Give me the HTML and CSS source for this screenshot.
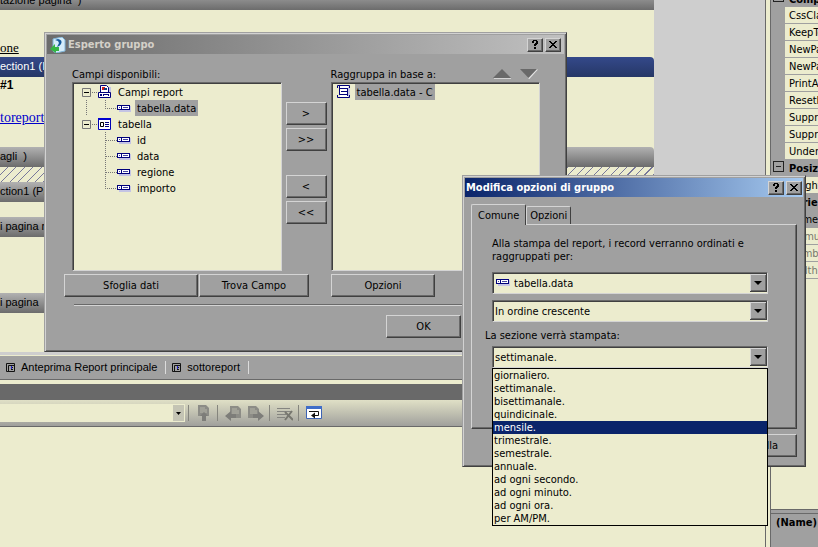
FILE: index.html
```html
<!DOCTYPE html>
<html lang="it">
<head>
    <meta charset="UTF-8">
    <meta name="viewport" content="width=device-width, initial-scale=1.0">
    <title>Esperto gruppo</title>
    <link rel="stylesheet" href="styles.css">
</head>
<body>
    <!-- Shared icons -->
    <svg class="sprite" aria-hidden="true">
        <symbol id="field" viewBox="0 0 14 16">
            <path d="M2 6h12v6H2z" fill="#c4c4e4"/>
            <path d="M0 5h13v5H0z" fill="#00007b"/>
            <path d="M1 6h3v3H1zM6 7h6v1H6z" fill="#fff"/>
            <path d="M5 6h7v3H5z" fill="#fff"/>
            <path d="M2 7h1v1H2zM6 7h5v1H6z" fill="#4646a0"/>
        </symbol>
        <symbol id="report" viewBox="0 0 14 16">
            <path d="M4 3h9v11H4z" fill="#c4c4e4"/>
            <path d="M2.500 9.500v-8h6l2 2v6z" fill="#fff" stroke="#00007b"/>
            <path d="M4 3h3v3H4z" fill="#d01818"/>
            <path d="M6 4h3v2H6z" fill="#123a7a"/>
            <path d="M0.500 8.500h12v5H0.500z" fill="#fff" stroke="#00007b"/>
            <path d="M2 10h2v2H2zM5 10h6v2H5z" fill="#00007b"/>
            <path d="M6 11h4v1H6z" fill="#fff"/>
        </symbol>
        <symbol id="table" viewBox="0 0 14 16">
            <path d="M0.500 2.500h12v11H0.500z" fill="#fff" stroke="#0000b4"/>
            <path d="M0 2h13v2H0z" fill="#0000d0"/>
            <path d="M2.500 6.500h3v4h-3z" fill="none" stroke="#000"/>
            <path d="M7 6.500h4M7 8.500h4M7 10.500h4" stroke="#00007b"/>
        </symbol>
        <symbol id="tree-parent" viewBox="0 0 20 16">
            <path d="M14 8.500h6" stroke="#777" stroke-dasharray="1 1"/>
            <path d="M4.500 4.500h8v8h-8z" fill="#ececce" stroke="#777"/>
            <path d="M6 8.500h5" stroke="#000"/>
        </symbol>
        <symbol id="tree-trunk" viewBox="0 0 20 16">
            <path d="M8.500 0v16" stroke="#777" stroke-dasharray="1 1"/>
        </symbol>
        <symbol id="tree-child" viewBox="0 0 19 16">
            <path d="M7.500 0v16M8 8.500h11" stroke="#777" stroke-dasharray="1 1"/>
        </symbol>
        <symbol id="tree-last" viewBox="0 0 19 16">
            <path d="M7.500 0v8M7 8.500h12" stroke="#777" stroke-dasharray="1 1"/>
        </symbol>
        <symbol id="preview" viewBox="0 0 10 10">
            <path d="M0.500 0.500h8v8h-8z" fill="none" stroke="#111"/>
            <path d="M2.500 8V2.500H8" stroke="#111" fill="none"/>
            <path d="M5 4.500h2M5 6.500h2" stroke="#111"/>
            <path d="M5 3h1v3H5z" fill="#22c"/>
        </symbol>
        <symbol id="help" viewBox="0 0 10 10">
            <path d="M2 1h1V0h4v1h1v3H7v1H6v1H4V4h1V3h1V1H4v2H2zM4 7h2v2H4z"/>
        </symbol>
        <symbol id="close" viewBox="0 0 10 10">
            <path d="M1 1h2v1h1v1h2V2h1V1h2v1H8v1H7v1H6v1h1v1h1v1h1v1H7V7H6V6H4v1H3v1H1V7h1V6h1V5h1V4H3V3H2V2H1z"/>
        </symbol>
        <symbol id="page" viewBox="0 0 16 16">
            <path d="M3 1h8l3 3v8H3z" fill="#8c8c86"/>
            <path d="M5 4h5M5 6h7M5 8h7" stroke="#b5b5a8"/>
        </symbol>
    </svg>

    <div class="workspace">
        <main class="editor">
            <div class="designer">
                <div class="report">
                    <div class="band band-first">tazione pagina&nbsp; )</div>
                    <div class="canvas canvas-title"><span class="serif">one</span></div>
                    <div class="band band-selected">ection1 (I</div>
                    <div class="canvas canvas-group">
                        <strong>#1</strong>
                        <a href="#sottoreport">toreport</a>
                    </div>
                    <div class="band">agli&nbsp; )</div>
                    <div class="canvas canvas-hatched"></div>
                    <div class="band">ction1 (Pi</div>
                    <div class="canvas canvas-thin"></div>
                    <div class="band">i pagina r</div>
                    <div class="canvas canvas-footer"></div>
                    <div class="band">i pagina</div>
                    <div class="canvas canvas-end"></div>
                </div>
            </div>
            <nav class="view-tabs">
                <a href="#anteprima"><svg width="10" height="10"><use href="#preview"/></svg>Anteprima Report principale</a>
                <a href="#sottoreport"><svg width="10" height="10"><use href="#preview"/></svg>sottoreport</a>
            </nav>
            <div class="output-title"></div>
            <div class="output-bar">
                <select class="output-source" aria-label="Origine output"></select>
                <div class="tool-group">
                    <button type="button" aria-label="Vai al messaggio">
                        <svg width="16" height="18" viewBox="0 0 16 18"><path d="M2 1h8l3 3v8H2z" fill="#8c8c86"/><path d="M4 4h5M4 6h7M4 8h7" stroke="#b5b5a8"/><path d="M8 8l4 4h-2v5H6v-5H4z" fill="#7d7d79"/></svg>
                    </button>
                </div>
                <div class="tool-group">
                    <button type="button" aria-label="Messaggio precedente">
                        <svg width="16" height="16" viewBox="0 0 16 16"><path d="M5 1h8l3 3v9H5z" fill="#8c8c86"/><path d="M7 4h5M7 6h7M7 8h7" stroke="#b5b5a8"/><path d="M0 11l6-5v3h5v4H6v3z" fill="#7d7d79"/></svg>
                    </button>
                    <button type="button" aria-label="Messaggio successivo">
                        <svg width="16" height="16" viewBox="0 0 16 16"><path d="M0 1h8l3 3v9H0z" fill="#8c8c86"/><path d="M2 4h5M2 6h7M2 8h7" stroke="#b5b5a8"/><path d="M16 11l-6-5v3H5v4h5v3z" fill="#7d7d79"/></svg>
                    </button>
                </div>
                <div class="tool-group">
                    <button type="button" aria-label="Cancella tutto">
                        <svg width="16" height="16" viewBox="0 0 16 16"><path d="M0 3.500h13M0 6.500h14M0 9.500h9M0 12.500h8" stroke="#858580"/><path d="M8 7l8 8M15 6l-7 9" stroke="#77776f" stroke-width="2"/></svg>
                    </button>
                </div>
                <div class="tool-group">
                    <button type="button" aria-label="A capo automatico">
                        <svg width="16" height="14" viewBox="0 0 16 14"><path d="M0.500 0.500h15v12H0.500z" fill="#fff" stroke="#3c63b4"/><path d="M0 0h16v3H0z" fill="#3f6dc8"/><path d="M3 5.500h9.500v4H7" fill="none" stroke="#111"/><path d="M5 9.500l4-3v6z" fill="#111"/></svg>
                    </button>
                </div>
            </div>
            <div class="output"></div>
        </main>

        <aside class="properties">
            <ul>
                <li class="category category-first">Comportamento</li>
                <li>CssClass</li>
                <li>KeepTogether</li>
                <li>NewPageAfter</li>
                <li>NewPageBefore</li>
                <li>PrintAtBottom</li>
                <li>ResetPage</li>
                <li>Suppress</li>
                <li>SuppressBlank</li>
                <li>Underlay</li>
                <li class="category">Posizione</li>
                <li>Height</li>
                <li class="category">Varie</li>
                <li class="current">Name</li>
                <li class="readonly">Formula</li>
                <li class="readonly">Number</li>
                <li class="readonly">Width</li>
            </ul>
            <div class="description">(Name)</div>
        </aside>
    </div>

    <!-- Group expert -->
    <section class="window expert" role="dialog" aria-labelledby="expert-title">
        <header class="title-bar inactive">
            <svg width="16" height="16" viewBox="0 0 16 16"><path d="M3 2l9-2 3 3v11l-9 2-3-2z" fill="#d5edfa" stroke="#80b4d8"/><path d="M5 3l3-1q5 1 3 5-1 2-4 3l2-4-1-2z" fill="#145a9c"/><path d="M0 12l5-5v3h4v4H6v2z" fill="#35b545"/></svg>
            <h2 id="expert-title">Esperto gruppo</h2>
            <button type="button" aria-label="Guida"><svg width="10" height="10"><use href="#help"/></svg></button>
            <button type="button" aria-label="Chiudi"><svg width="10" height="10"><use href="#close"/></svg></button>
        </header>
        <div class="expert-lists">
            <div class="list-column">
                <div class="list-heading">Campi disponibili:</div>
                <ul class="list-box tree">
                    <li><svg width="20" height="16"><use href="#tree-parent"/></svg><svg width="14" height="16"><use href="#report"/></svg><span>Campi report</span></li>
                    <li><svg width="20" height="16"><use href="#tree-trunk"/></svg><svg width="19" height="16"><use href="#tree-last"/></svg><svg width="14" height="16"><use href="#field"/></svg><span class="chosen">tabella.data</span></li>
                    <li><svg width="20" height="16"><use href="#tree-parent"/></svg><svg width="14" height="16"><use href="#table"/></svg><span>tabella</span></li>
                    <li class="leaf"><svg width="19" height="16"><use href="#tree-child"/></svg><svg width="14" height="16"><use href="#field"/></svg><span>id</span></li>
                    <li class="leaf"><svg width="19" height="16"><use href="#tree-child"/></svg><svg width="14" height="16"><use href="#field"/></svg><span>data</span></li>
                    <li class="leaf"><svg width="19" height="16"><use href="#tree-child"/></svg><svg width="14" height="16"><use href="#field"/></svg><span>regione</span></li>
                    <li class="leaf"><svg width="19" height="16"><use href="#tree-last"/></svg><svg width="14" height="16"><use href="#field"/></svg><span>importo</span></li>
                </ul>
            </div>
            <div class="move-buttons">
                <button type="button" class="btn">&gt;</button>
                <button type="button" class="btn">&gt;&gt;</button>
                <button type="button" class="btn btn-remove">&lt;</button>
                <button type="button" class="btn">&lt;&lt;</button>
            </div>
            <div class="list-column">
                <div class="list-heading">
                    <span>Raggruppa in base a:</span>
                    <button type="button" class="arrow" aria-label="Sposta su"><svg width="18" height="10" viewBox="0 0 18 10"><path d="M1 9.500h17" stroke="#d4d4d4"/><path d="M0 9L9 0l9 9z" fill="#696969"/></svg></button>
                    <button type="button" class="arrow" aria-label="Sposta giù"><svg width="18" height="10" viewBox="0 0 18 10"><path d="M17 0L8.500 9.500" stroke="#e4e4e4" stroke-width="2"/><path d="M0 0h17L8.500 9z" fill="#696969"/></svg></button>
                </div>
                <ul class="list-box">
                    <li><svg width="14" height="16" viewBox="0 0 14 16"><path d="M4 3h9v11H4z" fill="#c4c4e4"/><path d="M3 2h8v11H3z" fill="#fff"/><path d="M0.500 4V1.500h12V4M2.500 2v8M10.500 4v8M2 4.500h8M4 7.500h6M2 10.500h8M0.500 11v2.500h12V11" fill="none" stroke="#00007b"/></svg><span class="chosen">tabella.data - C</span></li>
                </ul>
            </div>
        </div>
        <div class="expert-actions">
            <button type="button" class="btn btn-browse">Sfoglia dati</button>
            <button type="button" class="btn btn-find">Trova Campo</button>
            <button type="button" class="btn btn-options">Opzioni</button>
        </div>
        <hr>
        <div class="expert-footer">
            <button type="button" class="btn">OK</button>
        </div>
    </section>

    <!-- Group options -->
    <section class="window options" role="dialog" aria-labelledby="options-title">
        <header class="title-bar">
            <h2 id="options-title">Modifica opzioni di gruppo</h2>
            <button type="button" aria-label="Guida"><svg width="10" height="10"><use href="#help"/></svg></button>
            <button type="button" aria-label="Chiudi"><svg width="10" height="10"><use href="#close"/></svg></button>
        </header>
        <div class="tabs" role="tablist">
            <button type="button" class="tab active" role="tab" aria-selected="true">Comune</button>
            <button type="button" class="tab" role="tab" aria-selected="false">Opzioni</button>
        </div>
        <div class="tab-panel">
            <label for="group-field">Alla stampa del report, i record verranno ordinati e raggruppati per:</label>
            <div class="combo combo-field">
                <svg class="combo-icon" width="14" height="16"><use href="#field"/></svg>
                <select id="group-field"><option>tabella.data</option></select>
            </div>
            <div class="combo">
                <select aria-label="Ordine"><option>In ordine crescente</option></select>
            </div>
            <label class="section-label" for="period">La sezione verrà stampata:</label>
            <div class="combo">
                <select id="period"><option>settimanale.</option></select>
                <ul class="drop-list" role="listbox" aria-label="Periodo">
                    <li role="option">giornaliero.</li>
                    <li role="option">settimanale.</li>
                    <li role="option">bisettimanale.</li>
                    <li role="option">quindicinale.</li>
                    <li role="option" class="active" aria-selected="true">mensile.</li>
                    <li role="option">trimestrale.</li>
                    <li role="option">semestrale.</li>
                    <li role="option">annuale.</li>
                    <li role="option">ad ogni secondo.</li>
                    <li role="option">ad ogni minuto.</li>
                    <li role="option">ad ogni ora.</li>
                    <li role="option">per AM/PM.</li>
                </ul>
            </div>
        </div>
        <div class="options-footer">
            <button type="button" class="btn">Annulla</button>
        </div>
    </section>
</body>
</html>
```
FILE: styles.css
```css
* {
    box-sizing: border-box;
}

body {
    margin: 0;
    height: 100vh;
    overflow: hidden;
    position: relative;
    font-family: "DejaVu Sans Condensed", Tahoma, sans-serif;
    font-size: 11px;
    line-height: 13px;
    color: #000;
    background-color: #ececce;
}

ul {
    list-style: none;
    margin: 0;
    padding: 0;
}

h2 {
    margin: 0;
}

svg {
    display: block;
    flex: none;
}

button,
select {
    font: inherit;
    color: inherit;
    margin: 0;
    padding: 0;
    border-radius: 0;
}

.sprite {
    position: absolute;
    width: 0;
    height: 0;
}

/* Report designer */
.workspace {
    display: flex;
    height: 100%;
}

.editor {
    flex: 1;
    min-width: 0;
    display: flex;
    flex-direction: column;
    border-right: 1px solid #696969;
}

.designer {
    background-color: #cecece;
    border-bottom: 3px solid #cecece;
}

.report {
    margin-right: 111px;
    background-color: #ececce;
}

.band {
    height: 20px;
    line-height: 18px;
    font-family: "Liberation Sans", Arial, sans-serif;
    font-size: 11px;
    white-space: nowrap;
    overflow: hidden;
    background: linear-gradient(#b2b2b2, #6c6c6c);
    border-top-right-radius: 4px;
}

.band-first {
    height: 10px;
    line-height: 0;
    border-radius: 0;
    background: linear-gradient(#8c8c8c, #6c6c6c);
}

.band-selected {
    color: #fff;
    background: linear-gradient(#34498a, #263766);
}

.canvas-title {
    height: 47px;
    padding-top: 31px;
}

.serif {
    font-family: "Liberation Serif", serif;
    font-size: 13px;
    text-decoration: underline;
}

.canvas-group {
    height: 70px;
}

.canvas-group strong,
.canvas-group a {
    display: block;
}

.canvas-group strong {
    padding-bottom: 18px;
    font-family: "Liberation Sans", Arial, sans-serif;
    font-size: 12px;
    line-height: 16px;
}

.canvas-group a {
    font-family: "Liberation Serif", serif;
    font-size: 14px;
    color: #00c;
}

.canvas-hatched {
    height: 15px;
    background: repeating-linear-gradient(135deg, #ececce 0 5px, #77779b 5px 6px);
}

.canvas-thin {
    height: 15px;
}

.canvas-footer {
    height: 56px;
}

.canvas-end {
    height: 39px;
}

.view-tabs {
    display: flex;
    align-items: center;
    height: 24px;
    margin-top: 1px;
    background-color: #a0a0a0;
    border-bottom: 1px solid #696969;
    font-family: "Liberation Sans", Arial, sans-serif;
}

.view-tabs a {
    display: flex;
    align-items: center;
    gap: 5px;
    padding: 0 8px 0 6px;
    color: #000;
    text-decoration: none;
    border-right: 1px solid #dcdcdc;
}

.output-title {
    height: 16px;
    margin-top: 4px;
    background-color: #696969;
}

.output-bar {
    display: flex;
    align-items: center;
    height: 27px;
    background: linear-gradient(#e0e0c6, #a0a09c);
    border-bottom: 1px solid #696969;
}

.output-source {
    appearance: none;
    width: 185px;
    height: 18px;
    border: 1px solid #ececce;
    background: url("data:image/svg+xml,%3Csvg xmlns='http://www.w3.org/2000/svg' width='11' height='16'%3E%3Cpath d='M0 0h11v16H0z' fill='%23c4c4b4'/%3E%3Cpath d='M3 7h5L5.500 10z'/%3E%3C/svg%3E") no-repeat right center #ececce;
}

.tool-group {
    display: flex;
    align-items: center;
    gap: 7px;
    height: 16px;
    margin-left: 3px;
    padding: 0 2px 0 7px;
    border-left: 1px solid #85857d;
}

.tool-group button {
    border: none;
    background: none;
}

.output {
    flex: 1;
}

/* Property grid */
.properties {
    flex: none;
    display: flex;
    flex-direction: column;
    width: 48px;
    margin-left: 4px;
    border-left: 1px solid #696969;
}

.properties ul {
    flex: 1;
}

.properties li {
    height: 17px;
    margin-left: 14px;
    padding-left: 4px;
    line-height: 17px;
    overflow: hidden;
    white-space: nowrap;
    border-bottom: 1px solid #a0a0a0;
    box-shadow: -14px 0 #a0a0a0;
}

.properties .category {
    position: relative;
    margin-left: 0;
    padding-left: 18px;
    font-weight: bold;
    background-color: #a0a0a0;
    box-shadow: none;
}

.properties .category-first {
    height: 7px;
    line-height: 0;
}

.category::before {
    content: "";
    position: absolute;
    left: 2px;
    bottom: 4px;
    width: 9px;
    height: 9px;
    border: 1px solid #222;
    background: linear-gradient(#222, #222) center / 5px 1px no-repeat;
}

.properties .current {
    background-color: #a0a0a0;
}

.properties .readonly {
    color: #77776c;
    box-shadow: none;
}

.description {
    height: 38px;
    padding: 5px;
    line-height: 15px;
    font-weight: bold;
    white-space: nowrap;
    overflow: hidden;
    background: linear-gradient(#696969, #696969) 0 3px / 100% 1px no-repeat #a0a0a0;
    border-top: 1px solid #696969;
}

/* Windows */
.window {
    position: absolute;
    padding: 2px;
    background-color: #a0a0a0;
    border: 1px solid;
    border-color: #a0a0a0 #404040 #404040 #a0a0a0;
    box-shadow: inset 1px 1px #d2d2d2, inset -1px -1px #696969;
}

.expert {
    left: 44px;
    top: 32px;
    width: 523px;
    height: 320px;
}

.options {
    left: 462px;
    top: 175px;
    width: 344px;
    height: 292px;
}

.title-bar {
    display: flex;
    align-items: center;
    gap: 2px;
    height: 19px;
    padding: 0 1px;
    color: #fff;
    background: linear-gradient(to right, #0a246a, #a6caf0);
}

.title-bar.inactive {
    padding: 0 3px;
    color: #d4d0c8;
    background: linear-gradient(to right, #6c6c6c, #c0c0c0);
}

.title-bar h2 {
    flex: 1;
    font-size: 11px;
    line-height: 13px;
}

.title-bar button {
    display: flex;
    align-items: center;
    justify-content: center;
    width: 16px;
    height: 14px;
}

.btn,
.title-bar button {
    background-color: #a0a0a0;
    border: 1px solid;
    border-color: #d4d4d4 #404040 #404040 #d4d4d4;
    box-shadow: inset -1px -1px #696969;
}

.btn {
    height: 23px;
    width: 75px;
}

.expert-lists {
    display: flex;
    gap: 4px;
    padding: 12px 24px 0 25px;
}

.list-column {
    flex: 1;
}

.list-heading {
    display: flex;
    align-items: center;
    gap: 9px;
    height: 16px;
    padding-right: 2px;
}

.list-heading span {
    flex: 1;
}

.arrow {
    border: none;
    background: none;
}

.list-box {
    height: 189px;
    padding: 1px 5px;
    background-color: #ececce;
    border: 1px solid;
    border-color: #696969 #d4d4d4 #d4d4d4 #696969;
    box-shadow: inset 1px 1px #404040;
}

.list-box li {
    display: flex;
    align-items: center;
    height: 16px;
}

.list-box span {
    margin-left: 4px;
    padding: 2px 2px 1px;
}

.tree .leaf {
    padding-left: 20px;
}

.chosen {
    background-color: #a0a0a0;
}

.move-buttons {
    display: flex;
    flex-direction: column;
    gap: 3px;
    padding-top: 36px;
}

.move-buttons .btn {
    width: 41px;
}

.move-buttons .btn-remove {
    margin-top: 21px;
}

.expert-actions {
    display: flex;
    gap: 1px;
    padding: 3px 17px 0;
}

.btn-browse {
    width: 134px;
}

.btn-find {
    width: 110px;
}

.btn-options {
    width: 104px;
    margin-left: 21px;
}

hr {
    height: 2px;
    margin: 7px 24px 0 27px;
    border: none;
    border-top: 1px solid #696969;
    border-bottom: 1px solid #d4d4d4;
}

.expert-footer {
    display: flex;
    justify-content: flex-end;
    padding: 9px 103px 0 0;
}

.tabs {
    display: flex;
    align-items: flex-end;
    padding: 7px 6px 0;
}

.tab {
    height: 18px;
    padding: 0 3px;
    background-color: #a0a0a0;
    border: 1px solid;
    border-color: #d4d4d4 #404040 #a0a0a0 #d4d4d4;
    border-bottom: none;
    border-radius: 2px 2px 0 0;
}

.tab.active {
    height: 21px;
    padding: 0 6px;
    margin-bottom: -1px;
    z-index: 1;
}

.tab-panel {
    height: 205px;
    margin: 0 6px;
    padding: 12px 28px 0 20px;
    border: 1px solid;
    border-color: #d4d4d4 #404040 #404040 #d4d4d4;
    box-shadow: inset -1px -1px #696969;
}

.tab-panel label {
    display: block;
    margin-bottom: 9px;
}

.tab-panel .section-label {
    margin: 7px 0 4px -7px;
}

.combo {
    position: relative;
    margin-bottom: 6px;
}

.combo select {
    display: block;
    appearance: none;
    width: 100%;
    height: 22px;
    padding: 1px 20px 0 2px;
    border: 1px solid;
    border-color: #696969 #d4d4d4 #d4d4d4 #696969;
    box-shadow: inset 1px 1px #404040;
    background: url("data:image/svg+xml,%3Csvg xmlns='http://www.w3.org/2000/svg' width='17' height='18'%3E%3Cpath d='M0 0h17v18H0z' fill='%23404040'/%3E%3Cpath d='M0 0h16v17H0z' fill='%23d4d4d4'/%3E%3Cpath d='M1 1h15v16H1z' fill='%23696969'/%3E%3Cpath d='M1 1h14v15H1z' fill='%23a0a0a0'/%3E%3Cpath d='M4 7h8L8 11z'/%3E%3C/svg%3E") no-repeat right center #ececce;
}

.combo-field select {
    padding-left: 21px;
}

.combo-icon {
    position: absolute;
    left: 4px;
    top: 2px;
}

.drop-list {
    position: absolute;
    top: 100%;
    left: 0;
    right: 0;
    z-index: 2;
    background-color: #ececce;
    border: 1px solid #000;
}

.drop-list li {
    height: 13px;
    padding-left: 1px;
}

.drop-list .active {
    color: #fff;
    background-color: #0a246a;
}

.options-footer {
    display: flex;
    justify-content: flex-end;
    padding: 5px 6px 0;
}
```
